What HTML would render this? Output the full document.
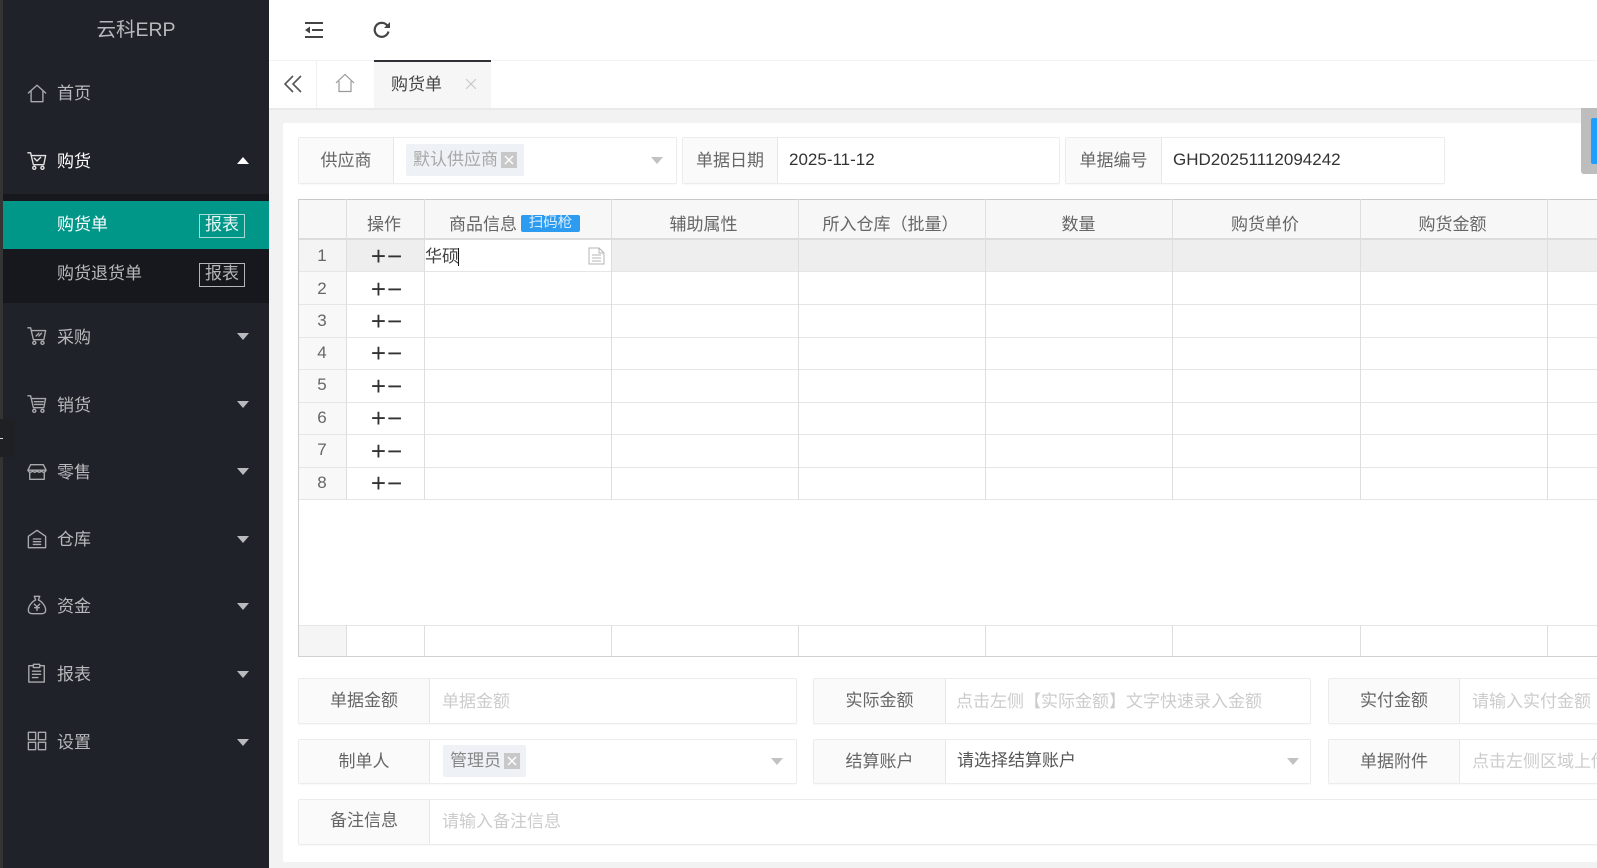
<!DOCTYPE html>
<html lang="zh"><head><meta charset="utf-8"><title>云科ERP</title>
<style>
html,body{margin:0;padding:0;width:1597px;height:868px;overflow:hidden;background:#f2f2f2}
body{position:relative;font-family:"Liberation Sans","Noto Sans CJK SC",sans-serif;font-size:17px;color:#666;filter:blur(.35px)}
div,svg,span.a{position:absolute}
.t{height:26px;line-height:26px;white-space:nowrap}
.c{text-align:center}
.m{color:#b8b9bc;left:57px;width:120px}
.ic{left:27px;width:20px;height:20px;fill:none;stroke:#a9aaad;stroke-width:1.5;stroke-linejoin:round;stroke-linecap:round}
.dn{left:237px;width:0;height:0;border-left:6.5px solid transparent;border-right:6.5px solid transparent;border-top:7px solid #b9babd}
.box{background:#fff;border:1px solid #ececec;border-radius:2px;box-sizing:border-box;box-shadow:0 1px 1px rgba(0,0,0,.03)}
.lab{left:0;top:0;bottom:0;background:#fafafa;border-right:1px solid #e8e8e8;text-align:center;color:#666;box-sizing:border-box}
.ph{color:#ccc}
.v{width:1px;background:#dedede}
.h{height:1px;background:#e6e6e6;left:298px;right:0}
.n{left:298px;width:48px;text-align:center;color:#666}
.o{left:348px;width:78px;text-align:center;color:#333;font-size:26px;height:26px;line-height:24px;letter-spacing:1px}
.th{top:212px;text-align:center;color:#666;height:26px;line-height:26px;white-space:nowrap}
.tag{background:#eef1f5;border-radius:2px;color:#a8a8a8}
.x{width:16px;height:16px;background:#c8c8c8}
.sel{width:0;height:0;border-left:6.5px solid transparent;border-right:6.5px solid transparent;border-top:7px solid #c2c2c2}
</style></head>
<body>
<!-- sidebar -->
<div style="left:0;top:0;width:3px;height:868px;background:#343434"></div>
<div style="left:3px;top:0;width:266px;height:868px;background:#20222a"></div>
<div style="left:0;top:419px;width:15px;height:38px;background:#1e2024"></div>
<div style="left:0;top:438px;width:3px;height:1px;background:#ddd"></div>
<div class="t c" style="left:3px;width:266px;top:17px;font-size:19.5px;color:#b8b9bc">云科ERP</div>

<svg class="ic" style="top:83px" viewBox="0 0 22 22"><path d="M1.500 11 11 2.500 20.500 11M4.500 9v11.500h13V9"/></svg>
<div class="t m" style="top:81px">首页</div>

<svg class="ic" style="top:151px;stroke:#e4e4e4" viewBox="0 0 22 22"><path d="M1 2h3l3 13h11.500L20.500 5H5M8 8l3 3 4-4"/><circle cx="8" cy="18.500" r="1.700"/><circle cx="17" cy="18.500" r="1.700"/></svg>
<div class="t m" style="top:149px;color:#fff">购货</div>
<div style="left:237px;top:157px;width:0;height:0;border-left:6.5px solid transparent;border-right:6.500px solid transparent;border-bottom:7px solid #fff"></div>

<div style="left:3px;top:194px;width:266px;height:109px;background:#17181d"></div>
<div style="left:3px;top:201px;width:266px;height:48px;background:#009688"></div>
<div class="t m" style="top:212px;color:#fff">购货单</div>
<div class="c" style="left:199px;top:214px;width:46px;height:24px;box-sizing:border-box;border:1px solid #a6dcd6;color:#e8f6f4;line-height:20px">报表</div>
<div class="t m" style="top:261px">购货退货单</div>
<div class="c" style="left:199px;top:263px;width:46px;height:24px;box-sizing:border-box;border:1px solid #b4b5b8;color:#b4b5b8;line-height:20px">报表</div>

<svg class="ic" style="top:326px" viewBox="0 0 22 22"><path d="M1 2h3l3 13h11.500L20.500 5H5M10 11l3-3M13 11l3-3"/><circle cx="8" cy="18.500" r="1.700"/><circle cx="17" cy="18.500" r="1.700"/></svg>
<div class="t m" style="top:325px">采购</div><div class="dn" style="top:333px"></div>

<svg class="ic" style="top:394px" viewBox="0 0 22 22"><path d="M1 2h3l3 13h11.500L20.500 5H5M8 8.500h10M8.500 11.500h9"/><circle cx="8" cy="18.500" r="1.700"/><circle cx="17" cy="18.500" r="1.700"/></svg>
<div class="t m" style="top:393px">销货</div><div class="dn" style="top:401px"></div>

<svg class="ic" style="top:462px" viewBox="0 0 22 22"><path d="M4 3h14l3 6H1zM1 9c1 3 5 3 5 0 1 3 4 3 5 0 1 3 4 3 5 0 0 3 4 3 5 0M3 12v7h16v-7"/></svg>
<div class="t m" style="top:460px">零售</div><div class="dn" style="top:468px"></div>

<svg class="ic" style="top:529px" viewBox="0 0 22 22"><path d="M1.500 8 11 1.500 20.500 8v12.500h-19zM7 11h8M7 14h8M7 17h8"/></svg>
<div class="t m" style="top:527px">仓库</div><div class="dn" style="top:536px"></div>

<svg class="ic" style="top:595px" viewBox="0 0 22 22"><path d="M8 1.500h6l-1.500 4c4 1.500 8 7 8 11 0 3-2 4-4 4h-11c-2 0-4-1-4-4 0-4 4-9.500 8-11zM8 10l3 3 3-3M11 13v4M8.500 14h5"/></svg>
<div class="t m" style="top:594px">资金</div><div class="dn" style="top:603px"></div>

<svg class="ic" style="top:663px" viewBox="0 0 22 22"><path d="M7 3H2v18h17V3h-5M7 1.500h7V5H7zM6 9h9M6 12.500h9M6 16h6"/></svg>
<div class="t m" style="top:662px">报表</div><div class="dn" style="top:671px"></div>

<svg class="ic" style="top:731px" viewBox="0 0 22 22"><path d="M1.500 1.500h8v8h-8zM12.500 1.500h8v8h-8zM1.500 12.500h8v8h-8zM12.500 12.500h8v8h-8z"/></svg>
<div class="t m" style="top:730px">设置</div><div class="dn" style="top:739px"></div>

<!-- top bar -->
<div style="left:269px;top:0;width:1328px;height:60px;background:#fff"></div>
<div style="left:269px;top:60px;width:1328px;height:1px;background:#f2f2f2"></div>
<svg style="left:305px;top:21px;width:19px;height:18px" viewBox="0 0 19 18" fill="#444"><rect x="0" y="1" width="18" height="2"/><rect x="0" y="15" width="18" height="2"/><rect x="7" y="8" width="11" height="2"/><path d="M5 5.500v7L0 9z"/></svg>
<svg style="left:372px;top:20px;width:20px;height:20px" viewBox="0 0 20 20" fill="none" stroke="#444" stroke-width="2.200"><path d="M16.500 11.500a7 7 0 1 1-2-6.800L17 7"/><path d="M18 2v6h-6" fill="#444" stroke="none"/></svg>

<!-- tab strip -->
<div style="left:269px;top:61px;width:1328px;height:47px;background:#fff"></div>
<div style="left:269px;top:108px;width:1328px;height:2px;background:#e9e9e9"></div>
<svg style="left:284px;top:75px;width:18px;height:18px" viewBox="0 0 18 18" fill="none" stroke="#555" stroke-width="1.600"><path d="M9 1 1 9l8 8M17 1 9 9l8 8"/></svg>
<div style="left:316px;top:61px;width:1px;height:47px;background:#f0f0f0"></div>
<svg style="left:335px;top:73px;width:20px;height:20px" viewBox="0 0 20 20" fill="none" stroke="#9a9a9a" stroke-width="1.200"><path d="M1 10 10 1.500 19 10M4 8v10.500h12V8"/></svg>
<div style="left:374px;top:60px;width:117px;height:48px;background:#f6f6f6"></div>
<div style="left:374px;top:60px;width:117px;height:2px;background:#2f2f35"></div>
<div class="t" style="left:391px;top:72px;color:#444">购货单</div>
<svg style="left:466px;top:79px;width:10px;height:10px" viewBox="0 0 10 10" stroke="#c4c4c4" stroke-width="1"><path d="M0 0l10 10M10 0 0 10"/></svg>

<!-- card -->
<div style="left:283px;top:123px;width:1314px;height:739px;background:#fff;border-radius:2px"></div>

<!-- top form -->
<div class="box" style="left:298px;top:137px;width:379px;height:47px">
 <div class="lab t" style="width:95px;height:auto;line-height:45px">供应商</div>
</div>
<div class="tag t" style="left:406px;top:144px;width:118px;height:32px;line-height:31px;text-indent:7px">默认供应商</div>
<div class="x" style="left:501px;top:152px"></div>
<svg style="left:501px;top:152px;width:16px;height:16px" viewBox="0 0 16 16" stroke="#fff" stroke-width="1.400"><path d="M4 4l8 8M12 4l-8 8"/></svg>
<div class="sel" style="left:651px;top:157px"></div>

<div class="box" style="left:682px;top:137px;width:378px;height:47px">
 <div class="lab t" style="width:95px;height:auto;line-height:45px">单据日期</div>
</div>
<div class="t" style="left:789px;top:147px;color:#333;font-size:17px">2025-11-12</div>

<div class="box" style="left:1065px;top:137px;width:380px;height:47px">
 <div class="lab t" style="width:96px;height:auto;line-height:45px">单据编号</div>
</div>
<div class="t" style="left:1173px;top:147px;color:#333;font-size:17px">GHD20251112094242</div>

<div style="left:1581px;top:108px;width:16px;height:66px;background:#bdbdbd;border-bottom-left-radius:3px"></div>
<div style="left:1591px;top:118px;width:6px;height:46px;background:#1e9fff;border-radius:2px 0 0 2px"></div>

<!-- table -->
<div style="left:298px;top:199px;width:1299px;height:40px;background:#f7f7f7"></div>
<div style="left:298px;top:239px;width:48px;height:261px;background:#f8f8f8"></div>
<div style="left:346px;top:239px;width:1251px;height:32px;background:#eeeeee"></div>
<div style="left:298px;top:239px;width:48px;height:32px;background:#f4f4f4"></div>
<div style="left:424px;top:239px;width:187px;height:32px;background:#fff"></div>
<div style="left:298px;top:625px;width:48px;height:31px;background:#f5f5f5"></div>

<div style="left:298px;top:199px;right:0;height:1px;background:#c9c9c9"></div>
<div style="left:298px;top:238px;right:0;height:2px;background:#dcdcdc"></div>
<div class="h" style="top:271px"></div><div class="h" style="top:304px"></div><div class="h" style="top:337px"></div><div class="h" style="top:369px"></div><div class="h" style="top:402px"></div><div class="h" style="top:434px"></div><div class="h" style="top:467px"></div><div class="h" style="top:499px"></div>
<div class="h" style="top:625px"></div>
<div style="left:298px;top:656px;right:0;height:1px;background:#d0d0d0"></div>

<div class="v" style="left:298px;top:199px;height:458px;background:#cfcfcf"></div>
<div class="v" style="left:346px;top:199px;height:301px"></div><div class="v" style="left:424px;top:199px;height:301px"></div><div class="v" style="left:611px;top:199px;height:301px"></div><div class="v" style="left:798px;top:199px;height:301px"></div><div class="v" style="left:985px;top:199px;height:301px"></div><div class="v" style="left:1172px;top:199px;height:301px"></div><div class="v" style="left:1360px;top:199px;height:301px"></div><div class="v" style="left:1547px;top:199px;height:301px"></div>
<div class="v" style="left:346px;top:625px;height:31px"></div><div class="v" style="left:424px;top:625px;height:31px"></div><div class="v" style="left:611px;top:625px;height:31px"></div><div class="v" style="left:798px;top:625px;height:31px"></div><div class="v" style="left:985px;top:625px;height:31px"></div><div class="v" style="left:1172px;top:625px;height:31px"></div><div class="v" style="left:1360px;top:625px;height:31px"></div><div class="v" style="left:1547px;top:625px;height:31px"></div>

<div class="th" style="left:345px;width:78px">操作</div>
<div class="th" style="left:449px;width:68px">商品信息</div>
<div class="c" style="left:521px;top:215px;width:59px;height:17px;line-height:17px;background:#2d9cf0;border-radius:2px;color:#d8eeff;font-size:14.500px">扫码枪</div>
<div class="th" style="left:610px;width:187px">辅助属性</div>
<div class="th" style="left:797px;width:187px">所入仓库（批量）</div>
<div class="th" style="left:985px;width:187px">数量</div>
<div class="th" style="left:1171px;width:188px">购货单价</div>
<div class="th" style="left:1359px;width:187px">购货金额</div>

<div class="t n" style="top:243px">1</div><div class="o" style="top:244px">+−</div>
<div class="t n" style="top:276px">2</div><div class="o" style="top:277px">+−</div>
<div class="t n" style="top:308px">3</div><div class="o" style="top:309px">+−</div>
<div class="t n" style="top:340px">4</div><div class="o" style="top:341px">+−</div>
<div class="t n" style="top:372px">5</div><div class="o" style="top:374px">+−</div>
<div class="t n" style="top:405px">6</div><div class="o" style="top:406px">+−</div>
<div class="t n" style="top:437px">7</div><div class="o" style="top:439px">+−</div>
<div class="t n" style="top:470px">8</div><div class="o" style="top:471px">+−</div>

<div class="t" style="left:425px;top:244px;color:#444">华硕</div>
<div style="left:458px;top:248px;width:1px;height:18px;background:#111"></div>
<svg style="left:588px;top:247px;width:17px;height:18px" viewBox="0 0 17 18" fill="none" stroke="#b4b4b4" stroke-width="1"><path d="M1 1h10l5 5v11H1zM11 1v5h5M4 8h9M4 11h9M4 14h9"/></svg>

<!-- bottom form -->
<div class="box" style="left:298px;top:678px;width:499px;height:46px"><div class="lab t" style="width:131px;height:auto;line-height:43px">单据金额</div></div>
<div class="t ph" style="left:442px;top:689px">单据金额</div>
<div class="box" style="left:813px;top:678px;width:498px;height:46px"><div class="lab t" style="width:132px;height:auto;line-height:43px">实际金额</div></div>
<div class="t ph" style="left:956px;top:689px">点击左侧【实际金额】文字快速录入金额</div>
<div class="box" style="left:1328px;top:678px;width:280px;height:46px;border-right:0"><div class="lab t" style="width:131px;height:auto;line-height:43px">实付金额</div></div>
<div class="t ph" style="left:1472px;top:689px">请输入实付金额</div>

<div class="box" style="left:298px;top:739px;width:499px;height:45px"><div class="lab t" style="width:131px;height:auto;line-height:43px">制单人</div></div>
<div class="tag t" style="left:443px;top:745px;width:83px;height:32px;line-height:31px;text-indent:7px;color:#888">管理员</div>
<div class="x" style="left:504px;top:753px"></div>
<svg style="left:504px;top:753px;width:16px;height:16px" viewBox="0 0 16 16" stroke="#fff" stroke-width="1.400"><path d="M4 4l8 8M12 4l-8 8"/></svg>
<div class="sel" style="left:771px;top:758px"></div>
<div class="box" style="left:813px;top:739px;width:498px;height:45px"><div class="lab t" style="width:132px;height:auto;line-height:43px">结算账户</div></div>
<div class="t" style="left:957px;top:748px;color:#555">请选择结算账户</div>
<div class="sel" style="left:1287px;top:758px"></div>
<div class="box" style="left:1328px;top:739px;width:280px;height:45px;border-right:0"><div class="lab t" style="width:131px;height:auto;line-height:43px">单据附件</div></div>
<div class="t ph" style="left:1472px;top:749px">点击左侧区域上传</div>

<div class="box" style="left:298px;top:799px;width:1310px;height:46px;border-right:0"><div class="lab t" style="width:131px;height:auto;line-height:41px">备注信息</div></div>
<div class="t ph" style="left:442px;top:809px">请输入备注信息</div>
</body></html>
